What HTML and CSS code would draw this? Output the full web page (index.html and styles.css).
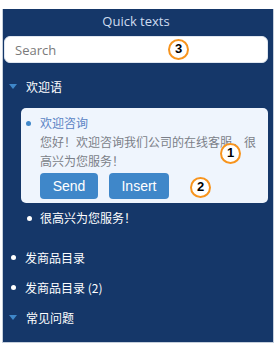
FILE: index.html
```html
<!DOCTYPE html>
<html>
<head>
<meta charset="utf-8">
<link rel="stylesheet" href="styles.css">
</head>
<body>
<div class="panel">
  <div class="title">Quick texts</div>
  <div class="search-wrap">
    <input class="search" type="text" placeholder="Search">
    <span class="badge badge-3">3</span>
  </div>
  <div class="group">
    <span class="caret"></span><span class="group-name">欢迎语</span>
  </div>
  <div class="card">
    <div class="item-title"><span class="dot dot-blue"></span>欢迎咨询</div>
    <div class="item-body">您好！欢迎咨询我们公司的在线客服，很高兴为您服务！</div>
    <div class="actions">
      <button class="btn">Send</button>
      <button class="btn">Insert</button>
      <span class="badge badge-2">2</span>
    </div>
    <span class="badge badge-1">1</span>
  </div>
  <div class="sub-item"><span class="dot dot-white"></span>很高兴为您服务！</div>
  <div class="row row-first"><span class="dot dot-white"></span>发商品目录</div>
  <div class="row"><span class="dot dot-white"></span>发商品目录 (2)</div>
  <div class="row"><span class="caret"></span><span class="group-name">常见问题</span></div>
</div>
</body>
</html>
```
FILE: styles.css
```css
html, body {
  margin: 0;
  padding: 0;
  background: #ffffff;
}
body {
  font-family: "Noto Sans CJK SC", "Open Sans", sans-serif;
}
.panel {
  box-sizing: border-box;
  margin: 9px 0 0 2px;
  width: 272px;
  height: 334px;
  background: #153769;
  border-left: 1px solid #c5cfdc;
  border-right: 1px solid #c5cfdc;
  border-bottom: 1px solid #c5cfdc;
  padding: 0 5px 0 1px;
  color: #ffffff;
}
.title {
  font-family: "Open Sans", sans-serif;
  font-size: 13px;
  line-height: 18px;
  padding: 3px 0 6px;
  text-align: center;
  color: #cfdcf0;
}
.search-wrap {
  position: relative;
}
.search {
  box-sizing: border-box;
  display: block;
  width: 100%;
  height: 27px;
  border: 1px solid #dfe6ef;
  border-radius: 6px;
  background: #ffffff;
  padding: 0 10px;
  font-family: "Open Sans", sans-serif;
  font-size: 13px;
  outline: none;
}
.search::placeholder {
  color: #7a7a7a;
}
.badge {
  position: absolute;
  box-sizing: border-box;
  width: 21px;
  height: 21px;
  border: 2.5px solid #f7941d;
  border-radius: 50%;
  background: #ffffff;
  color: #000000;
  font-family: "Liberation Sans", sans-serif;
  font-weight: bold;
  font-size: 13px;
  line-height: 16px;
  text-align: center;
}
.badge-3 {
  left: 164px;
  top: 3px;
}
.badge-1 {
  left: 199px;
  top: 35px;
}
.badge-2 {
  left: 150px;
  top: 4px;
}
.group {
  display: flex;
  align-items: center;
  height: 24px;
  margin-top: 11px;
}
.caret {
  width: 0;
  height: 0;
  border-left: 4.5px solid transparent;
  border-right: 4.5px solid transparent;
  border-top: 5px solid #3f87c9;
  margin: 0 9px 0 5px;
}
.group-name {
  font-size: 12px;
  color: #ffffff;
}
.card {
  position: relative;
  margin: 10px 0 0 17px;
  background: #eff5fd;
  border-radius: 5px;
  padding: 6px 9px 4px 19px;
  height: 85px;
}
.item-title {
  position: relative;
  font-size: 12px;
  line-height: 18px;
  color: #5a83c4;
}
.dot {
  position: absolute;
  width: 5px;
  height: 5px;
  border-radius: 50%;
}
.dot-blue {
  background: #3f87c9;
  left: -14px;
  top: 7px;
}
.dot-white {
  background: #ffffff;
}
.item-body {
  font-size: 12px;
  line-height: 19px;
  color: #7b7f88;
}
.actions {
  position: relative;
  display: flex;
  gap: 11px;
  margin-top: 3px;
}
.btn {
  height: 26px;
  border: none;
  border-radius: 4px;
  background: #3f87c9;
  color: #ffffff;
  font-family: "Liberation Sans", sans-serif;
  font-size: 14px;
  padding: 0;
  width: 58px;
}
.btn + .btn {
  width: 60px;
}
.sub-item {
  position: relative;
  margin-top: 5px;
  padding-left: 36px;
  font-size: 12px;
  line-height: 20px;
}
.sub-item .dot {
  left: 23px;
  top: 8px;
}
.row {
  position: relative;
  display: flex;
  align-items: center;
  height: 30px;
  padding-left: 21px;
  font-size: 12px;
}
.row .dot {
  left: 7px;
  top: 13px;
}
.row .caret {
  margin-left: -16px;
}
.row-first {
  margin-top: 14px;
}
```
